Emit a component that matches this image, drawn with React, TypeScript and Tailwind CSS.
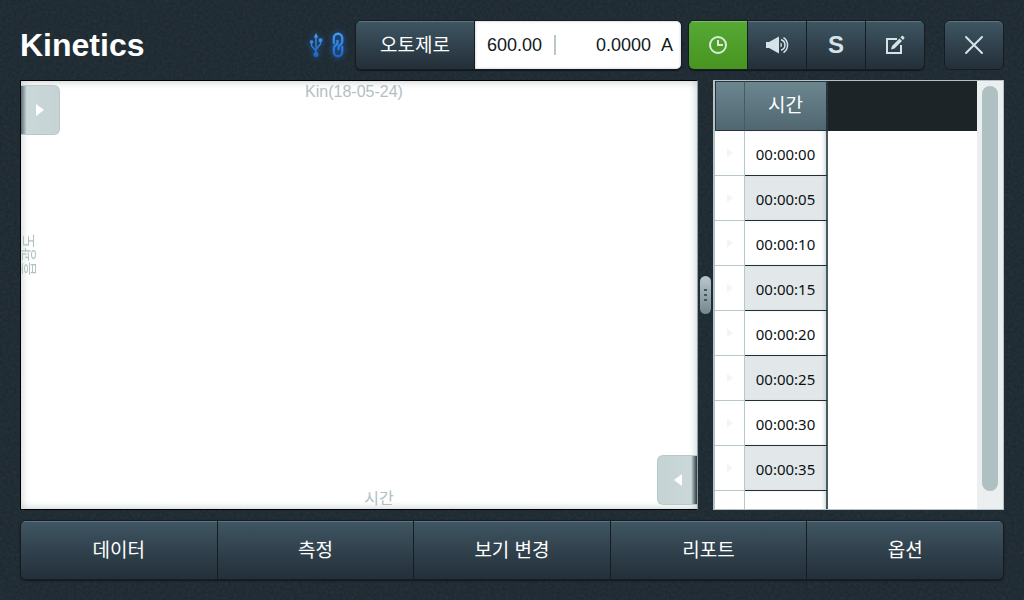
import { useState } from "react";
import clsx from "clsx";

const times = [
  "00:00:00",
  "00:00:05",
  "00:00:10",
  "00:00:15",
  "00:00:20",
  "00:00:25",
  "00:00:30",
  "00:00:35",
];

const menuItems = ["데이터", "측정", "보기 변경", "리포트", "옵션"];

const buttonFace =
  "bg-linear-to-b from-[#3f5663] to-[#232f39] shadow-[inset_0_1px_0_#5f7681]";

// Fine grain over the dark page background
function Grain() {
  return (
    <svg
      aria-hidden="true"
      className="pointer-events-none absolute inset-0 h-full w-full opacity-8"
    >
      <filter id="grain">
        <feTurbulence type="fractalNoise" baseFrequency="0.35" numOctaves="2" />
        <feColorMatrix type="saturate" values="0" />
      </filter>
      <rect width="100%" height="100%" filter="url(#grain)" />
    </svg>
  );
}

function UsbIcon() {
  return (
    <svg
      width="14"
      height="28"
      viewBox="0 0 14 28"
      fill="none"
      className="drop-shadow-[0_0_3px_#1c62b8]"
    >
      <defs>
        <linearGradient id="usb" x1="0" y1="0" x2="0" y2="28" gradientUnits="userSpaceOnUse">
          <stop stopColor="#4da6fa" />
          <stop offset="1" stopColor="#1a5fc4" />
        </linearGradient>
      </defs>
      <g stroke="url(#usb)" strokeWidth="1.3">
        <path d="M7 4v19" />
        <path d="M2.500 11.500V15l4.500 5" />
        <path d="M11.500 9.500V13L7 18.500" />
      </g>
      <g fill="url(#usb)">
        <path d="M7 2l2.300 4.500H4.700z" />
        <circle cx="2.500" cy="11" r="1.800" />
        <path d="M9.800 7.500h3.500V11H9.800z" />
        <circle cx="7" cy="23.500" r="2.500" />
      </g>
    </svg>
  );
}

function LinkIcon() {
  return (
    <svg
      width="14"
      height="28"
      viewBox="0 0 14 28"
      fill="none"
      className="drop-shadow-[0_0_3px_#1c62b8]"
    >
      <defs>
        <linearGradient id="link" x1="0" y1="0" x2="0" y2="28" gradientUnits="userSpaceOnUse">
          <stop stopColor="#459ff5" />
          <stop offset="1" stopColor="#1a5fc4" />
        </linearGradient>
      </defs>
      <g stroke="url(#link)" strokeWidth="2.4" strokeLinecap="round">
        <path d="M2.800 12V7a4.200 4.200 0 0 1 8.400 0v4c0 3-3.700 2.500-3.700 5.500V18" />
        <path d="M11.200 16v5a4.200 4.200 0 0 1-8.400 0v-4c0-3 3.700-2.500 3.700-5.500V10" />
      </g>
    </svg>
  );
}

function ClockIcon() {
  return (
    <svg width="20" height="20" viewBox="0 0 20 20" fill="none" stroke="#d8ecd8">
      <circle cx="10" cy="10" r="8" strokeWidth="2" />
      <path d="M10 5v5h5" strokeWidth="2" />
    </svg>
  );
}

function SpeakerIcon() {
  return (
    <svg width="24" height="20" viewBox="0 0 24 20" fill="none">
      <path d="M1 7h3l10-5.500v17L4 13H1z" fill="#d5e3e8" />
      <path d="M15.500 7.500a2.800 2.800 0 0 1 0 5z" fill="#d5e3e8" />
      <g stroke="#d5e3e8">
        <path d="M16 4.800a5.400 5.400 0 0 1 0 10.400" strokeWidth="1.500" />
        <path d="M18.500 2.500a9 9 0 0 1 0 15" strokeWidth="1.500" />
      </g>
    </svg>
  );
}

function EditIcon() {
  return (
    <svg width="20" height="20" viewBox="0 0 20 20" fill="none">
      <path d="M12 4H2v14h14v-8" stroke="#d5e3e8" strokeWidth="2" />
      <path d="M6 14.500l1-3.500 7.500-7.500 2.500 2.500-7.500 7.500z" fill="#d5e3e8" />
      <path d="M15.500 2.500l1.200-1.400a1 1 0 0 1 1.400 0l1.100 1.100a1 1 0 0 1 0 1.400L18 5z" fill="#d5e3e8" />
    </svg>
  );
}

function CloseIcon() {
  return (
    <svg width="20" height="20" viewBox="0 0 20 20" fill="none">
      <path d="M2 2l16 16M18 2L2 18" stroke="#d5e3e8" strokeWidth="2" strokeLinecap="round" />
    </svg>
  );
}

function Arrow({ className }: { className: string }) {
  return (
    <svg width="8" height="12" viewBox="0 0 8 12" className={className}>
      <path d="M0 0l8 6-8 6z" fill="currentColor" />
    </svg>
  );
}

const tools = [
  { id: "timer", label: "Timer", icon: <ClockIcon /> },
  { id: "sound", label: "Sound", icon: <SpeakerIcon /> },
  { id: "s", label: "S", icon: <span className="text-2xl leading-none font-bold">S</span> },
  { id: "edit", label: "Edit", icon: <EditIcon /> },
];

function Header() {
  const [activeTool, setActiveTool] = useState("timer");

  return (
    <header className="flex h-[50px] shrink-0 items-center">
      <h1 className="flex-1 text-[32px] leading-[50px] font-bold text-white">Kinetics</h1>

      <div className="mr-2.5 flex items-center gap-2">
        <UsbIcon />
        <LinkIcon />
      </div>

      <div className="mr-1.5 flex h-full overflow-hidden rounded-md border border-[#161c22] shadow-[0_1px_1px_#11171c]">
        <button
          type="button"
          className={clsx(
            "w-[119px] border-r border-[#161c22] pt-0.5 text-[19px] text-white",
            buttonFace
          )}
        >
          오토제로
        </button>
        <div className="flex w-[206px] items-center bg-white pr-2 pl-3 text-lg text-[#10181c] shadow-[inset_0_0_3px_#b5c2c5]">
          <output>600.00</output>
          <span className="ml-3 h-5 w-0.5 bg-[#b8c8ca]" />
          <output className="flex-1 text-right">0.0000</output>
          <span className="ml-2.5">A</span>
        </div>
      </div>

      <div className="mr-[19px] flex h-full overflow-hidden rounded-md border border-[#161c22] shadow-[0_1px_1px_#11171c]">
        {tools.map((tool) => (
          <button
            key={tool.id}
            type="button"
            aria-label={tool.label}
            aria-pressed={activeTool === tool.id}
            onClick={() => setActiveTool(tool.id)}
            className={clsx(
              "flex w-[59px] items-center justify-center border-r border-[#161c22] text-[#d5e3e8] last:w-[58px] last:border-r-0",
              activeTool === tool.id
                ? "bg-linear-to-b from-[#56a935] to-[#47951f] shadow-[inset_0_1px_0_#7cc05f]"
                : buttonFace
            )}
          >
            {tool.icon}
          </button>
        ))}
      </div>

      <button
        type="button"
        aria-label="Close"
        className={clsx(
          "flex h-full w-[60px] items-center justify-center rounded-md border border-[#161c22]",
          buttonFace
        )}
      >
        <CloseIcon />
      </button>
    </header>
  );
}

function ChartPanel() {
  return (
    <section className="relative flex flex-1 flex-col items-center justify-between border border-r-[#8fa0a5] border-l-black border-t-black border-b-black bg-white text-base text-[#b0c0c2] shadow-[inset_0_0_8px_#b9c5c7]">
      <h2 className="mr-2.5 leading-[22px]">Kin(18-05-24)</h2>
      <span className="absolute top-[153px] left-0 rotate-180 text-[15px] leading-4 [text-orientation:sideways] [writing-mode:vertical-rl]">
        흡광도
      </span>
      <span className="ml-10 leading-5">시간</span>

      <button
        type="button"
        aria-label="Open left panel"
        className="absolute top-1 left-0 flex h-[50px] w-[39px] items-center justify-center rounded-r-md border border-l-0 border-[#b9c9ca] bg-linear-to-r from-[#5c6f78] via-[#cbd8d9] via-15% to-[#c5d3d4]"
      >
        <Arrow className="text-white" />
      </button>
      <button
        type="button"
        aria-label="Open right panel"
        className="absolute right-0 bottom-1 flex h-[50px] w-10 items-center justify-center rounded-l-md border border-r-0 border-[#b9c9ca] bg-linear-to-l from-[#2c3a42] via-[#cbd8d9] via-15% to-[#c5d3d4]"
      >
        <Arrow className="rotate-180 text-white" />
      </button>
    </section>
  );
}

function Splitter() {
  return (
    <div
      role="separator"
      aria-orientation="vertical"
      className="flex w-[15px] shrink-0 items-center justify-center"
    >
      <div className="flex h-[38px] w-[11px] flex-col items-center justify-center gap-[3px] rounded-full bg-linear-to-b from-[#b9c8cc] to-[#75878e]">
        <span className="h-0.5 w-[3px] bg-[#46565e]" />
        <span className="h-0.5 w-[3px] bg-[#46565e]" />
        <span className="h-0.5 w-[3px] bg-[#46565e]" />
      </div>
    </div>
  );
}

function TimeTable() {
  return (
    <section className="flex w-[291px] shrink-0 overflow-hidden border border-l-2 border-[#b2c2c5] bg-white">
      <div className="min-w-0 flex-1 overflow-hidden">
        <table className="w-full table-fixed border-separate border-spacing-0 text-center">
          <colgroup>
            <col className="w-[30px]" />
            <col className="w-[83px]" />
            <col />
          </colgroup>
          <thead>
            <tr className="h-[50px]">
              <th className="border border-[#26343b] border-r-[#465a63] bg-linear-to-b from-[#6c8690] to-[#506770]" />
              <th className="border border-r-2 border-l-0 border-[#26343b] bg-linear-to-b from-[#6c8690] to-[#506770] p-0 text-[19px] font-normal text-white">
                시간
              </th>
              <th className="bg-[#1d2427]" />
            </tr>
          </thead>
          <tbody className="font-['Noto_Sans','Noto_Sans_CJK_KR',sans-serif] text-[15px] text-[#0c1114]">
            {times.map((time, i) => (
              <tr key={time} className="h-[45px]">
                <td className="border-r border-b border-[#b7c8ca] p-0">
                  <Arrow className="mx-auto h-2.5 w-1.5 text-[#f3f5f5]" />
                </td>
                <td
                  className={clsx(
                    "border-r-2 border-b border-r-[#4a5a62] border-b-[#222f37] px-0 pt-0.5 pb-0 shadow-[inset_-3px_0_4px_-2px_#c3cdcf]",
                    i % 2 === 1 && "bg-[#e2e7e9]"
                  )}
                >
                  {time}
                </td>
                <td />
              </tr>
            ))}
            <tr className="h-[45px]">
              <td className="border-r border-[#b7c8ca]" />
              <td className="border-r-2 border-[#4a5a62] shadow-[inset_-3px_0_4px_-2px_#c3cdcf]" />
              <td />
            </tr>
          </tbody>
        </table>
      </div>
      <div className="w-[26px] bg-[#ebefef] px-[5px] pt-[5px] pb-[18px]">
        <div className="h-full rounded-full bg-[#afc0c3]" />
      </div>
    </section>
  );
}

export default function App() {
  return (
    <div className="relative h-screen min-h-[400px] bg-[#1b272f] font-['Liberation_Sans','Noto_Sans_CJK_KR',sans-serif]">
      <Grain />
      <div className="relative flex h-full flex-col gap-2.5 p-5">
        <Header />

        {/* The table overhangs its panel, so the row clips to the space left */}
        <main className="grid min-h-0 flex-1 grid-rows-[minmax(0,1fr)]">
          <div className="flex min-h-0">
            <ChartPanel />
            <Splitter />
            <TimeTable />
          </div>
        </main>

        <nav className="flex h-[60px] shrink-0 overflow-hidden rounded-md border border-[#161c22] shadow-[0_1px_2px_#11171c]">
          {menuItems.map((item) => (
            <button
              key={item}
              type="button"
              className={clsx(
                "flex-1 border-r border-[#161c22] pt-0.5 text-[19px] text-white last:border-r-0",
                buttonFace
              )}
            >
              {item}
            </button>
          ))}
        </nav>
      </div>
    </div>
  );
}
